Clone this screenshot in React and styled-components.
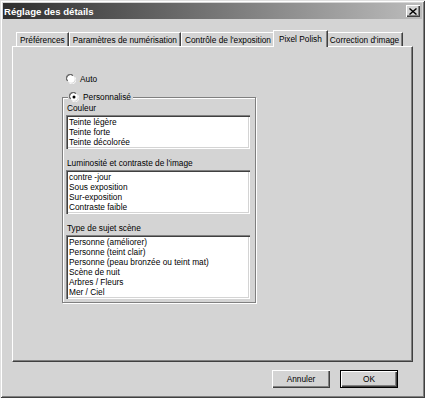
import React, { useState } from 'react';
import styled, { createGlobalStyle } from 'styled-components';

const GlobalStyle = createGlobalStyle`
  html, body {
    margin: 0;
    padding: 0;
    background: #d4d4d4;
  }
  * {
    box-sizing: border-box;
  }
`;

const FONT = `"Liberation Sans", Arial, sans-serif`;

const Window = styled.div`
  width: 425px;
  height: 398px;
  padding: 3px;
  background: #d4d4d4;
  font-family: ${FONT};
  font-size: 8.3px;
  color: #000;
  box-shadow: inset 1px 1px #e0e0e0, inset -1px -1px #404040,
    inset 2px 2px #ffffff, inset -2px -2px #808080;
  display: flex;
  flex-direction: column;
`;

const TitleBar = styled.div`
  height: 16px;
  display: flex;
  align-items: center;
  justify-content: space-between;
  padding: 0 2px 0 1px;
  background: linear-gradient(to right, #2e2e2e, #bcbcbc);
`;

const Title = styled.span`
  color: #fff;
  font-weight: bold;
  font-size: 9.6px;
`;

const CloseButton = styled.button`
  width: 14px;
  height: 12px;
  padding: 0;
  border: none;
  background: #d4d4d4;
  display: flex;
  align-items: center;
  justify-content: center;
  box-shadow: inset 1px 1px #fff, inset -1px -1px #404040, inset -2px -2px #808080;
`;

const Body = styled.div`
  flex: 1;
  display: flex;
  flex-direction: column;
  padding: 10px 9px 0 9px;
`;

const TabRow = styled.div`
  display: flex;
  align-items: flex-end;
  height: 17px;
  padding-left: 4px;
`;

const Tab = styled.div`
  position: relative;
  height: ${p => (p.$active ? '17px' : '14px')};
  margin: ${p => (p.$active ? '0 -2px -1px -2px' : '0')};
  padding: ${p => (p.$active ? '3px 5px 0' : '2px 3px 0')};
  z-index: ${p => (p.$active ? 2 : 1)};
  background: #d4d4d4;
  white-space: nowrap;
  line-height: 10px;
  border-top: 1px solid #fff;
  border-left: 1px solid #fff;
  border-right: 1px solid #404040;
  box-shadow: inset -1px 0 #808080;
`;

const Panel = styled.div`
  height: 316px;
  display: flex;
  flex-direction: column;
  align-items: flex-start;
  padding: 26px 0 0 53px;
  border-top: 1px solid #fff;
  border-left: 1px solid #fff;
  border-right: 1px solid #404040;
  border-bottom: 1px solid #404040;
  box-shadow: inset -1px -1px #808080;
`;

const RadioRow = styled.label`
  display: flex;
  align-items: center;
  gap: 4px;
  height: 12px;
  line-height: 10px;
`;

const Group = styled.fieldset`
  margin: 6px 0 0 -4px;
  width: 194px;
  height: 212px;
  padding: 0 5px 0 4px;
  border: none;
  box-shadow: inset 1px 1px #808080, inset -1px -1px #808080,
    inset 2px 2px #fff, 1px 1px #fff;
  border-radius: 0;
`;

const Legend = styled.legend`
  padding: 0 2px 0 1px;
  margin-left: 2px;
  background: #d4d4d4;
`;

const FieldLabel = styled.div`
  height: 10px;
  line-height: 10px;
  margin: ${p => (p.$first ? '0' : '9px')} 0 2px 1px;
`;

const ListBox = styled.div`
  width: 184px;
  background: #fff;
  padding: 2px 0 2px 2px;
  box-shadow: inset 1px 1px #808080, inset 2px 2px #404040,
    inset -1px -1px #fff, inset -2px -2px #d4d4d4;
`;

const ListItem = styled.div`
  height: 10px;
  line-height: 10px;
  padding-left: 1px;
  white-space: nowrap;
`;

const Footer = styled.div`
  display: flex;
  justify-content: flex-end;
  gap: 10px;
  margin-top: 8px;
  padding-right: 15px;
`;

const Button = styled.button`
  width: 58px;
  height: 18px;
  padding: 0;
  font-family: ${FONT};
  font-size: 8.3px;
  background: #d4d4d4;
  border: none;
  box-shadow: ${p =>
    p.$default
      ? 'inset 0 0 0 1px #000, inset 2px 2px #fff, inset -2px -2px #404040, inset -3px -3px #808080'
      : 'inset 1px 1px #fff, inset -1px -1px #404040, inset -2px -2px #808080'};
`;

const Radio = ({ checked }) => (
  <svg width="10" height="10" viewBox="0 0 12 12">
    <path d="M1 8 A5 5 0 0 1 8 1" stroke="#808080" fill="none" strokeWidth="1" />
    <circle cx="6" cy="6" r="4.5" fill="#fff" />
    <path d="M2 8.5 A4.2 4.2 0 0 1 8.5 2" stroke="#404040" fill="none" strokeWidth="1" />
    <path d="M11 4 A5 5 0 0 1 4 11" stroke="#fff" fill="none" strokeWidth="1" />
    {checked && <circle cx="6" cy="6" r="1.8" fill="#000" />}
  </svg>
);

const CloseIcon = () => (
  <svg width="8" height="7" viewBox="0 0 8 7">
    <path d="M0.5 0.5 L7.5 6.5 M7.5 0.5 L0.5 6.5" stroke="#000" strokeWidth="1.4" />
  </svg>
);

const tabs = [
  'Préférences',
  'Paramètres de numérisation',
  "Contrôle de l'exposition",
  'Pixel Polish',
  "Correction d'image",
];

const sections = [
  { label: 'Couleur', items: ['Teinte légère', 'Teinte forte', 'Teinte décolorée'] },
  {
    label: "Luminosité et contraste de l'image",
    items: ['contre -jour', 'Sous exposition', 'Sur-exposition', 'Contraste faible'],
  },
  {
    label: 'Type de sujet  scène',
    items: [
      'Personne (améliorer)',
      'Personne (teint clair)',
      'Personne (peau bronzée ou teint mat)',
      'Scène de nuit',
      'Arbres / Fleurs',
      'Mer / Ciel',
    ],
  },
];

export default function App() {
  const [mode, setMode] = useState('custom');

  return (
    <>
      <GlobalStyle />
      <Window>
        <TitleBar>
          <Title>Réglage des détails</Title>
          <CloseButton>
            <CloseIcon />
          </CloseButton>
        </TitleBar>
        <Body>
          <TabRow>
            {tabs.map(t => (
              <Tab key={t} $active={t === 'Pixel Polish'}>
                {t}
              </Tab>
            ))}
          </TabRow>
          <Panel>
            <RadioRow onClick={() => setMode('auto')}>
              <Radio checked={mode === 'auto'} />
              Auto
            </RadioRow>
            <Group>
              <Legend>
                <RadioRow onClick={() => setMode('custom')}>
                  <Radio checked={mode === 'custom'} />
                  Personnalisé
                </RadioRow>
              </Legend>
              {sections.map((s, i) => (
                <div key={s.label}>
                  <FieldLabel $first={i === 0}>{s.label}</FieldLabel>
                  <ListBox>
                    {s.items.map(it => (
                      <ListItem key={it}>{it}</ListItem>
                    ))}
                  </ListBox>
                </div>
              ))}
            </Group>
          </Panel>
          <Footer>
            <Button>Annuler</Button>
            <Button $default>OK</Button>
          </Footer>
        </Body>
      </Window>
    </>
  );
}
